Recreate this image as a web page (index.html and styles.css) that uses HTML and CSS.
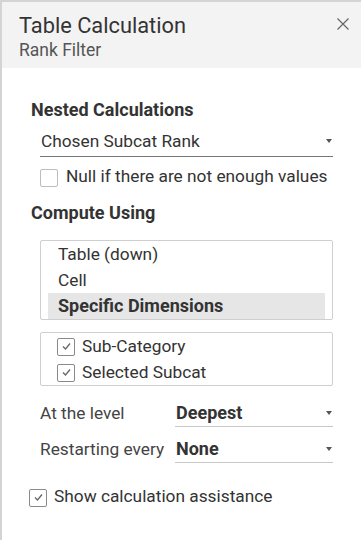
FILE: index.html
```html
<!DOCTYPE html>
<html>
<head>
<meta charset="utf-8">
<link rel="stylesheet" href="styles.css">
</head>
<body>
<div class="panel">
  <div class="header">
    <div class="titles">
      <div class="title">Table Calculation</div>
      <div class="subtitle">Rank Filter</div>
    </div>
    <svg class="close" width="12" height="12" viewBox="0 0 12 12"><path d="M0.5 0.5 L11.5 11.5 M11.5 0.5 L0.5 11.5" stroke="#666" stroke-width="1.2" fill="none"/></svg>
  </div>
  <div class="content">
    <div class="section-title first">Nested Calculations</div>
    <div class="dropdown wide">
      <span class="dd-text">Chosen Subcat Rank</span>
      <span class="arrow"></span>
    </div>
    <label class="check-row indent">
      <span class="box"></span>
      <span>Null if there are not enough values</span>
    </label>
    <div class="section-title compute">Compute Using</div>
    <div class="listbox">
      <div class="item">Table (down)</div>
      <div class="item">Cell</div>
      <div class="item selected">Specific Dimensions</div>
    </div>
    <div class="listbox dims">
      <div class="dim"><span class="box checked"><svg width="11" height="9" viewBox="0 0 11 9"><path d="M2 4.5 L4.5 7 L9 1.5" stroke="#666" stroke-width="1.3" fill="none"/></svg></span><span>Sub-Category</span></div>
      <div class="dim"><span class="box checked"><svg width="11" height="9" viewBox="0 0 11 9"><path d="M2 4.5 L4.5 7 L9 1.5" stroke="#666" stroke-width="1.3" fill="none"/></svg></span><span>Selected Subcat</span></div>
    </div>
    <div class="field first-field">
      <span class="label">At the level</span>
      <div class="dropdown value">
        <span class="dd-text bold">Deepest</span>
        <span class="arrow"></span>
      </div>
    </div>
    <div class="field">
      <span class="label">Restarting every</span>
      <div class="dropdown value">
        <span class="dd-text bold">None</span>
        <span class="arrow"></span>
      </div>
    </div>
    <label class="check-row assist">
      <span class="box checked"><svg width="11" height="9" viewBox="0 0 11 9"><path d="M2 4.5 L4.5 7 L9 1.5" stroke="#666" stroke-width="1.3" fill="none"/></svg></span>
      <span>Show calculation assistance</span>
    </label>
  </div>
</div>
</body>
</html>
```

FILE: styles.css
```css
html, body {
  margin: 0;
  padding: 0;
  background: #fff;
}
body {
  font-family: Roboto, "Liberation Sans", sans-serif;
  color: #333;
  font-size: 17.3px;
}
.panel {
  width: 359px;
  height: 538px;
  border-left: 2px solid #d4d4d4;
  border-top: 2px solid #d4d4d4;
  box-sizing: content-box;
}
.header {
  background: #f3f3f3;
  height: 66px;
  box-sizing: border-box;
  padding: 11px 12px 0 17px;
  display: flex;
  justify-content: space-between;
  align-items: flex-start;
}
.title {
  font-size: 21.8px;
  line-height: 26px;
  color: #333;
}
.subtitle {
  font-size: 17.5px;
  line-height: 22px;
  color: #555;
}
.close {
  margin-top: 5px;
}
.content {
  display: flex;
  flex-direction: column;
  padding: 0 0 0 29px;
}
.section-title {
  font-weight: bold;
  font-size: 18px;
  line-height: 26px;
  color: #333;
}
.section-title.first {
  margin-top: 29px;
}
.section-title.compute {
  margin-top: 11px;
}
.dropdown {
  display: flex;
  align-items: center;
  justify-content: space-between;
  border-bottom: 1px solid #777;
  line-height: 26px;
  padding-bottom: 2px;
  box-sizing: border-box;
}
.dropdown.wide {
  margin-top: 5px;
  margin-left: 9px;
  width: 293px;
  padding-left: 1px;
}
.arrow {
  width: 0;
  height: 0;
  border-left: 3.5px solid transparent;
  border-right: 3.5px solid transparent;
  border-top: 4px solid #555;
  margin-right: 1px;
}
.check-row {
  display: flex;
  align-items: center;
  gap: 8px;
  line-height: 26px;
}
.check-row.indent {
  margin-top: 6px;
  margin-left: 9px;
}
.box {
  width: 18px;
  height: 18px;
  box-sizing: border-box;
  border: 1px solid #8a8a8a;
  border-radius: 2px;
  background: #fff;
  display: inline-flex;
  align-items: center;
  justify-content: center;
  flex-shrink: 0;
  margin-top: 3px;
}
.check-row.indent .box {
  border-color: #bdbdbd;
}
.listbox {
  margin-left: 9px;
  width: 293px;
  border: 1px solid #cfcfcf;
  border-radius: 2px;
  box-sizing: border-box;
  margin-top: 14px;
  display: flex;
  flex-direction: column;
}
.item {
  line-height: 26px;
  margin: 0 7px;
  padding-left: 10px;
}
.item.selected {
  background: #e6e6e6;
  font-weight: bold;
  font-size: 18px;
}
.dims {
  margin-top: 12px;
}
.dim {
  display: flex;
  align-items: center;
  gap: 7px;
  line-height: 26px;
  padding-left: 16px;
}
.dim .box {
  margin-top: 1px;
}
.field {
  display: flex;
  align-items: flex-start;
  margin-left: 9px;
  margin-top: 9px;
}
.field.first-field {
  margin-top: 14px;
}
.label {
  width: 135px;
  line-height: 26px;
  color: #444;
  white-space: nowrap;
}
.dropdown.value {
  width: 158px;
  padding-left: 1px;
  border-bottom-color: #c8c8c8;
  height: 27px;
  padding-bottom: 0;
}
.bold {
  font-weight: bold;
  font-size: 18px;
}
.check-row.assist {
  margin-top: 20px;
  margin-left: -2px;
  gap: 7px;
}
```
